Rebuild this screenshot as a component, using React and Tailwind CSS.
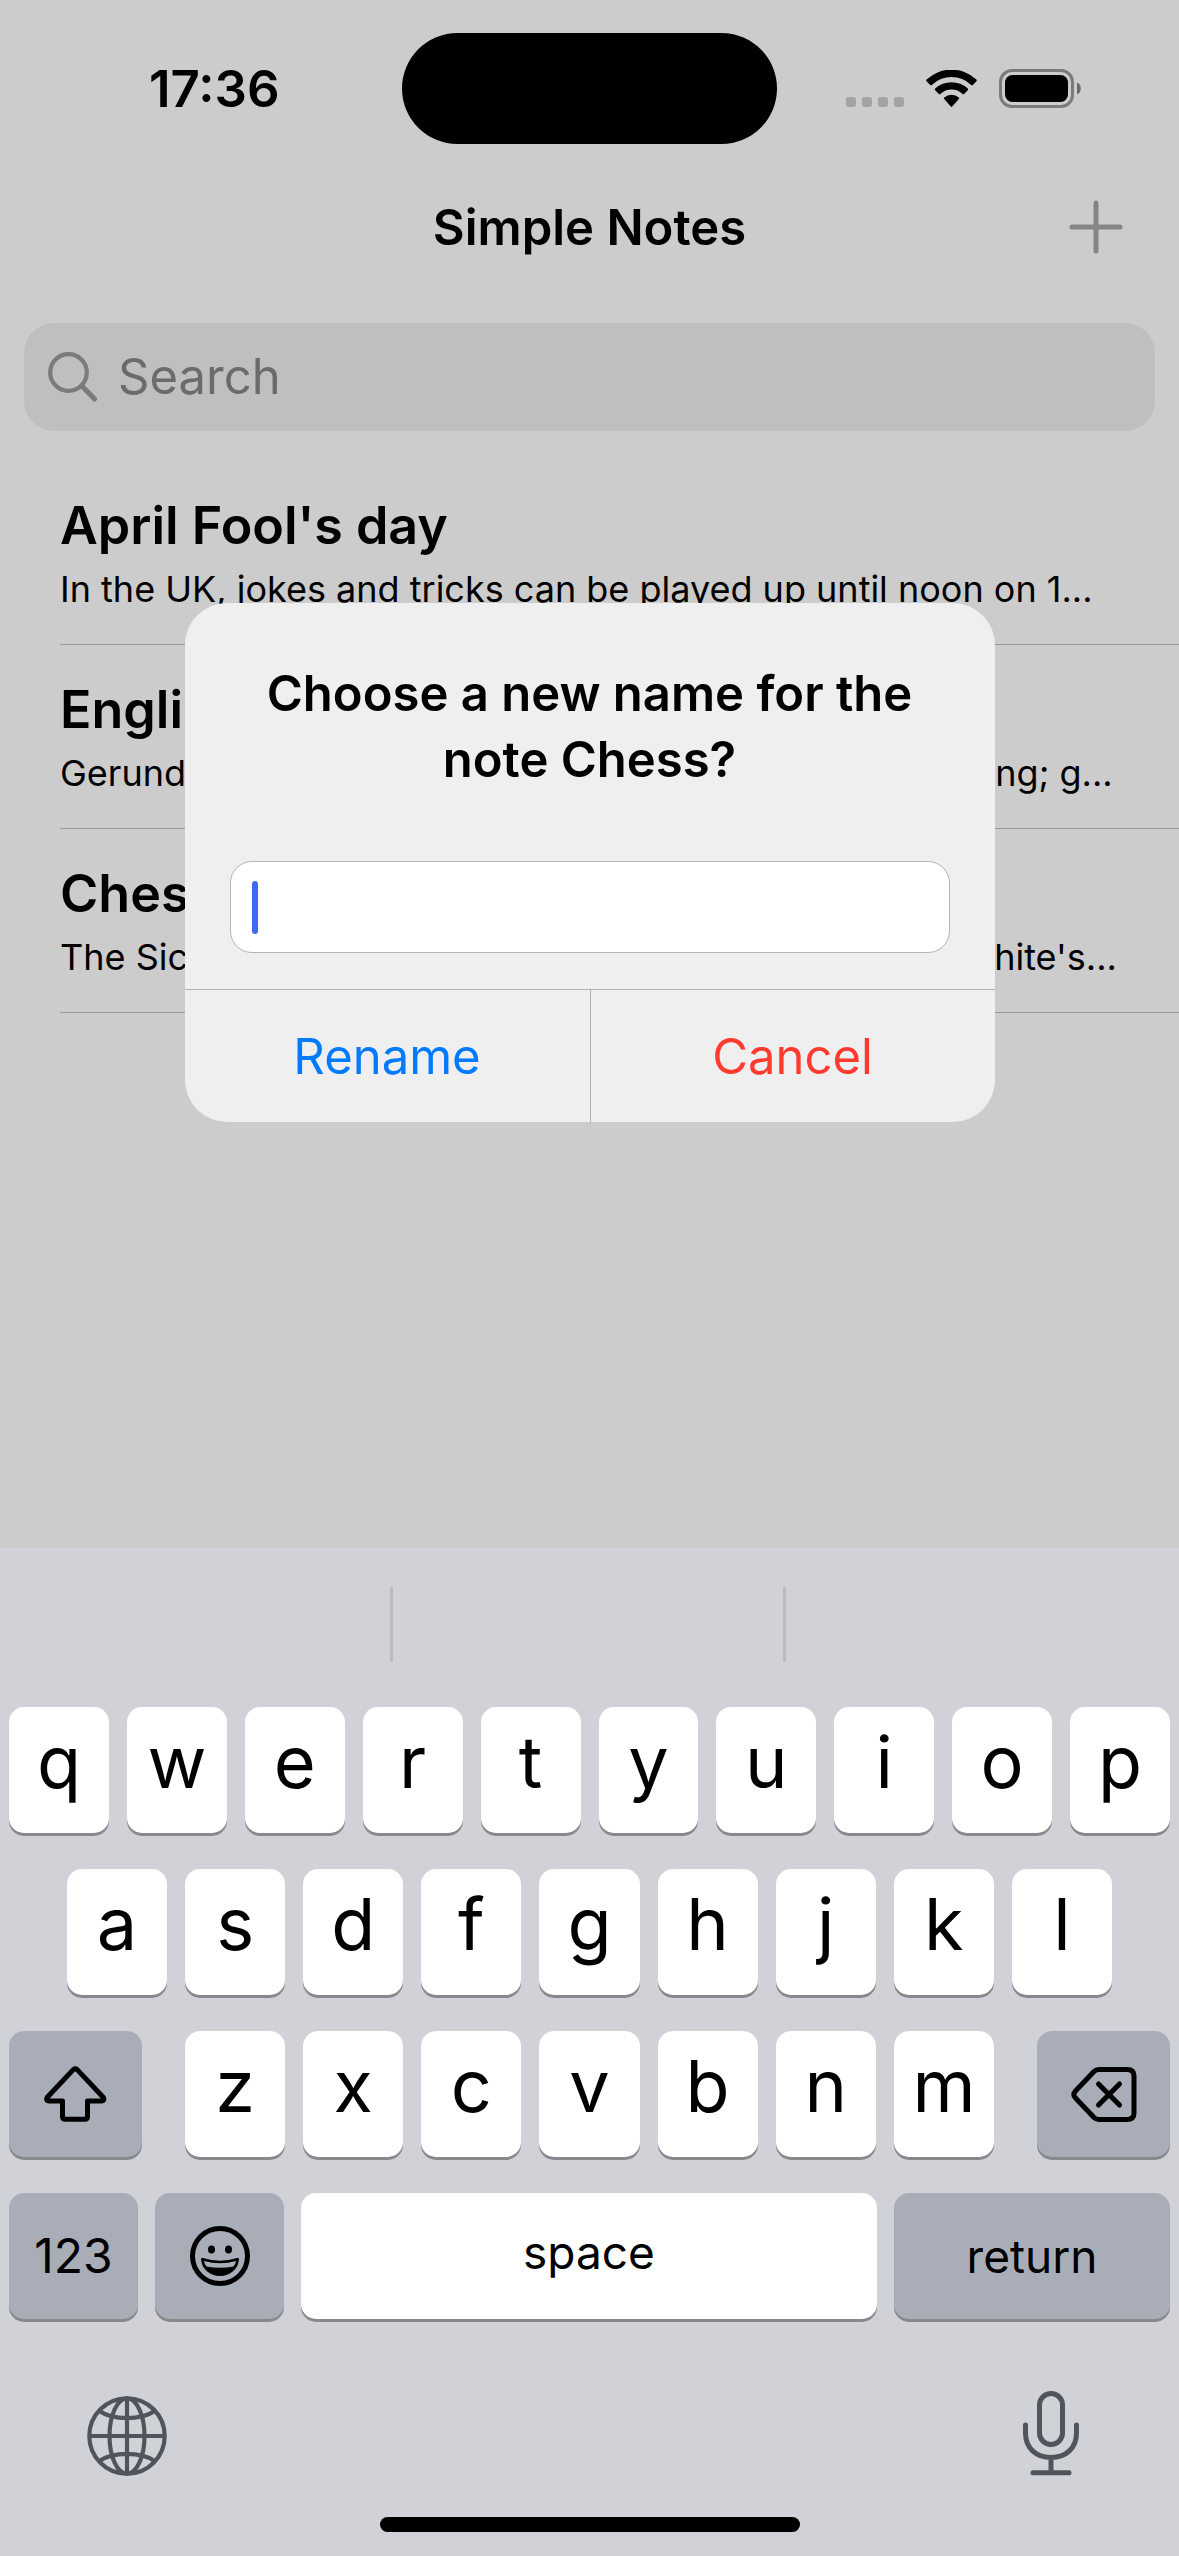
import React from "react";

const notes = [
  { title: "April Fool's day", preview: "In the UK, jokes and tricks can be played up until noon on 1..." },
  { title: "English grammar", preview: "Gerunds are often nouns made from verbs by adding -ing; g..." },
  { title: "Chess", preview: "The Sicilian Defence is the most popular rejoinder to White's..." },
];

const WifiIcon = () => (
  <svg className="h-[37px] w-[51px]" viewBox="0 0 51 37" aria-hidden="true">
    <path d="M0.6 11.2a1.1 1.1 0 0 1 0-1.6a36 36 0 0 1 49.8 0a1.1 1.1 0 0 1 0 1.6l-3.6 3.7a1.2 1.2 0 0 1-1.6 0a28.5 28.5 0 0 0-39.4 0a1.2 1.2 0 0 1-1.6 0z" />
    <path d="M9.2 20.2a1.1 1.1 0 0 1 0-1.6a23.8 23.8 0 0 1 32.6 0a1.1 1.1 0 0 1 0 1.6l-3.7 3.8a1.2 1.2 0 0 1-1.6 0a16 16 0 0 0-22 0a1.2 1.2 0 0 1-1.6 0z" />
    <path d="M18.2 29a1.1 1.1 0 0 1 0-1.6a11 11 0 0 1 14.6 0a1.1 1.1 0 0 1 0 1.6l-6.4 7.3a1.2 1.2 0 0 1-1.8 0z" />
  </svg>
);

const BatteryIcon = () => (
  <svg className="h-[39px] w-[82px]" viewBox="0 0 82 39" aria-hidden="true">
    <rect x="1.5" y="1.5" width="72" height="36" rx="11.5" fill="none" stroke="#7b7b7b" strokeWidth="3" />
    <rect x="6" y="6" width="63" height="27" rx="7.5" />
    <path d="M78 13.5c5 1.6 5 10.4 0 12z" fill="#6b6b6b" />
  </svg>
);

const PlusIcon = () => (
  <svg className="size-[54px]" viewBox="0 0 54 54" fill="none" stroke="#858585" strokeWidth="5" strokeLinecap="round" aria-hidden="true">
    <path d="M27 3v48M3 27h48" />
  </svg>
);

const SearchIcon = () => (
  <svg className="size-[50px] shrink-0" viewBox="0 0 50 50" fill="none" stroke="#7b7b7b" strokeLinecap="round" aria-hidden="true">
    <circle cx="20.5" cy="20.5" r="18.3" strokeWidth="4.2" />
    <path d="M34 34L46.5 47" strokeWidth="5" />
  </svg>
);

const ShiftIcon = () => (
  <svg className="h-[56px] w-[64px]" viewBox="0 0 64 56" fill="none" stroke="#000" strokeWidth="5" strokeLinejoin="round" aria-hidden="true">
    <path d="M29.3 3.6L3.3 31.3Q1.5 34.6 5 35H18.5V50.5Q18.5 53.3 21.5 53.3H40.5Q43.5 53.3 43.5 50.5V35H57.5Q61 34.6 59.2 31.3L33.2 3.6Q31.3 2 29.3 3.6Z" />
  </svg>
);

const DeleteIcon = () => (
  <svg className="h-[55px] w-[66px]" viewBox="0 0 66 55" fill="none" stroke="#000" strokeWidth="5" strokeLinecap="round" strokeLinejoin="round" aria-hidden="true">
    <path d="M28 2.5H56Q63 2.5 63 9V46Q63 52.5 56 52.5H28Q25 52.5 23 50.5L4.5 31Q1.2 27.5 4.5 24L23 4.5Q25 2.5 28 2.5Z" />
    <path d="M27.5 17L48.5 38M48.5 17L27.5 38" />
  </svg>
);

const EmojiIcon = () => (
  <svg className="size-[60px]" viewBox="0 0 60 60" aria-hidden="true">
    <circle cx="30" cy="30" r="27.5" fill="none" stroke="#000" strokeWidth="5" />
    <ellipse cx="21.5" cy="23.5" rx="3.5" ry="4" />
    <ellipse cx="38.5" cy="23.5" rx="3.5" ry="4" />
    <path d="M11 33Q11 31.5 13 32Q30 37.5 47 32Q49 31.5 49 33C48.5 43 40 50 30 50S11.5 43 11 33Z" />
    <path d="M14 35Q30 39.5 46 35Q45.5 38.5 43.5 40.5Q30 43 16.5 40.5Q14.5 38.5 14 35Z" fill="#a9adb8" />
  </svg>
);

const GlobeIcon = () => (
  <svg className="size-[80px]" viewBox="0 0 80 80" fill="none" stroke="#50555b" strokeWidth="4.2" aria-hidden="true">
    <circle cx="40" cy="40" r="37.7" />
    <ellipse cx="40" cy="40" rx="17.5" ry="37.7" />
    <path d="M40 2v76M2 40h76M12.5 15C26 24.5 54 24.5 67.5 15M12.5 65C26 55.5 54 55.5 67.5 65" />
  </svg>
);

const MicIcon = () => (
  <svg className="h-[85px] w-[56px]" viewBox="0 0 56 85" fill="none" stroke="#50555b" strokeWidth="5" strokeLinecap="round" aria-hidden="true">
    <rect x="16.5" y="2.5" width="23" height="51" rx="11.5" />
    <path d="M2.5 34V42C2.5 57 13 66.5 28 66.5S53.5 57 53.5 42V34M28 67V81M10 81.8H46" />
  </svg>
);

function LetterKey({ children }) {
  return (
    <button type="button" className="h-[126px] min-w-0 flex-1 rounded-[15px] bg-white pb-4 text-[72px] leading-[110px] font-[370] shadow-[0_3px_0_#88898d]">
      {children}
    </button>
  );
}

function ActionKey({ label, className, children }) {
  return (
    <button type="button" aria-label={label} className={`flex h-[126px] items-center justify-center rounded-[15px] bg-[#a9adb8] shadow-[0_3px_0_#88898d] ${className}`}>
      {children}
    </button>
  );
}

function Keyboard() {
  return (
    <section aria-label="Keyboard" className="flex flex-col bg-[#d1d2d8]">
      <div className="grid h-[159px] grid-cols-3 pt-[39px]">
        <div className="h-[75px] border-r-3 border-[#bbbcc2]" />
        <div className="h-[75px] border-r-3 border-[#bbbcc2]" />
      </div>
      <div className="flex flex-col gap-9 px-[9px]">
        <div className="flex gap-[18px]">
          {"qwertyuiop".split("").map((k) => <LetterKey key={k}>{k}</LetterKey>)}
        </div>
        <div className="flex gap-[18px] px-[58px]">
          {"asdfghjkl".split("").map((k) => <LetterKey key={k}>{k}</LetterKey>)}
        </div>
        <div className="flex gap-[43px]">
          <ActionKey label="Shift" className="w-[133px]"><ShiftIcon /></ActionKey>
          <div className="flex flex-1 gap-[18px]">
            {"zxcvbnm".split("").map((k) => <LetterKey key={k}>{k}</LetterKey>)}
          </div>
          <ActionKey label="Delete" className="w-[133px]"><DeleteIcon /></ActionKey>
        </div>
        <div className="flex gap-[17px]">
          <ActionKey className="w-[129px] text-[48px]">123</ActionKey>
          <ActionKey label="Emoji" className="w-[129px]"><EmojiIcon /></ActionKey>
          <button type="button" className="h-[126px] flex-1 rounded-[15px] bg-white pb-2 text-[46px] shadow-[0_3px_0_#88898d]">space</button>
          <ActionKey className="w-[276px] text-[46px]">return</ActionKey>
        </div>
      </div>
      <div className="flex items-center justify-between pt-[72px] pr-[100px] pl-[87px]">
        <button type="button" aria-label="Next keyboard" className="pt-[5px]"><GlobeIcon /></button>
        <button type="button" aria-label="Dictate"><MicIcon /></button>
      </div>
      <div className="mt-[41px] mb-6 h-[15px] w-[420px] self-center rounded-full bg-black" />
    </section>
  );
}

function RenameDialog() {
  return (
    <div className="absolute inset-0 flex items-center justify-center pt-[177px]">
      <form role="dialog" aria-labelledby="rename-title" onSubmit={(e) => e.preventDefault()} className="w-[810px] overflow-hidden rounded-[42px] bg-[#efefef]">
        <div className="px-[45px] pt-[58px] pb-9">
          <h2 id="rename-title" className="text-center text-[49px] leading-[66px] font-semibold">
            Choose a new name for the note Chess?
          </h2>
          <div className="relative mt-[68px]">
            <input type="text" aria-labelledby="rename-title" className="block h-[92px] w-full rounded-[22px] border border-[#b4b4b4] bg-white px-5 text-[46px] caret-transparent outline-none" />
            <span aria-hidden="true" className="absolute top-5 left-[22px] h-[53px] w-[6px] rounded-sm bg-[#4169f0]" />
          </div>
        </div>
        <div className="grid grid-cols-2 border-t border-[#b0b2b0] text-[49px]">
          <button type="submit" className="h-[132px] pt-[2px] text-[#007aff]">Rename</button>
          <button type="button" className="h-[132px] border-l border-[#b0b2b0] pt-[2px] text-[#ff3b30]">Cancel</button>
        </div>
      </form>
    </div>
  );
}

export default function App() {
  return (
    <div className="flex min-h-screen flex-col bg-[#cccccc] font-['Inter',sans-serif] text-black">
      <div className="relative flex-1">
        <div className="grid h-[177px] grid-cols-[1fr_375px_1fr] items-center">
          <span className="pl-[149px] text-[51px] leading-none font-semibold">17:36</span>
          <div className="h-[111px] rounded-full bg-black" />
          <div className="flex items-center justify-end gap-[22px] pr-[98px]">
            <div className="mt-[27px] flex gap-[6px]">
              {[0, 1, 2, 3].map((i) => <span key={i} className="size-[10px] rounded-[3px] bg-[#a3a3a3]" />)}
            </div>
            <WifiIcon />
            <BatteryIcon />
          </div>
        </div>
        <header className="grid h-[100px] grid-cols-[1fr_auto_1fr] items-center">
          <h1 className="col-start-2 text-[49px] leading-none font-semibold">Simple Notes</h1>
          <button type="button" aria-label="Add note" className="mr-[56px] justify-self-end"><PlusIcon /></button>
        </header>
        <label className="mx-6 mt-[46px] flex h-[108px] items-center gap-5 rounded-[30px] bg-[#bfbfbf] px-6">
          <SearchIcon />
          <input type="search" aria-label="Search" placeholder="Search" className="min-w-0 flex-1 bg-transparent text-[49px] outline-none placeholder:text-[#6b6b6d]" />
        </label>
        <ul className="mt-[30px] ml-[60px]">
          {notes.map((n) => (
            <li key={n.title} className="h-[184px] overflow-hidden border-b border-[#999a9a] pt-[33px]">
              <h2 className="text-[52px] leading-[64px] font-semibold">{n.title}</h2>
              <p className="mt-[9px] text-[36px] leading-[44px] whitespace-nowrap">{n.preview}</p>
            </li>
          ))}
        </ul>
        <RenameDialog />
      </div>
      <Keyboard />
    </div>
  );
}
